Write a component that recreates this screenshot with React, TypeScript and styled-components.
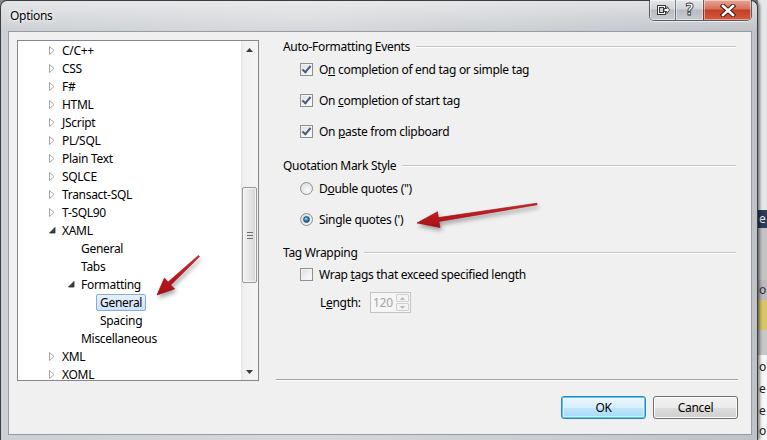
import React from 'react';
import styled, { createGlobalStyle, css } from 'styled-components';

const GlobalStyle = createGlobalStyle`
  html, body {
    margin: 0;
    padding: 0;
  }
  body {
    width: 767px;
    height: 440px;
    overflow: hidden;
    background: #8a8a8a;
    font-family: "Segoe UI", "Noto Sans", "Liberation Sans", sans-serif;
    font-size: 12px;
    letter-spacing: -0.3px;
    color: #000;
  }
`;

type TreeNode = {
  label: string;
  level: number;
  state?: 'collapsed' | 'expanded';
  selected?: boolean;
};

const treeNodes: TreeNode[] = [
  { label: 'C/C++', level: 0, state: 'collapsed' },
  { label: 'CSS', level: 0, state: 'collapsed' },
  { label: 'F#', level: 0, state: 'collapsed' },
  { label: 'HTML', level: 0, state: 'collapsed' },
  { label: 'JScript', level: 0, state: 'collapsed' },
  { label: 'PL/SQL', level: 0, state: 'collapsed' },
  { label: 'Plain Text', level: 0, state: 'collapsed' },
  { label: 'SQLCE', level: 0, state: 'collapsed' },
  { label: 'Transact-SQL', level: 0, state: 'collapsed' },
  { label: 'T-SQL90', level: 0, state: 'collapsed' },
  { label: 'XAML', level: 0, state: 'expanded' },
  { label: 'General', level: 1 },
  { label: 'Tabs', level: 1 },
  { label: 'Formatting', level: 1, state: 'expanded' },
  { label: 'General', level: 2, selected: true },
  { label: 'Spacing', level: 2 },
  { label: 'Miscellaneous', level: 1 },
  { label: 'XML', level: 0, state: 'collapsed' },
  { label: 'XOML', level: 0, state: 'collapsed' },
];

// builds a tapered arrow outline from tail to tip
const arrowPoints = (x1: number, y1: number, x2: number, y2: number, headLen: number, headHalf: number) => {
  const dx = x2 - x1;
  const dy = y2 - y1;
  const len = Math.sqrt(dx * dx + dy * dy);
  const ux = dx / len;
  const uy = dy / len;
  const px = -uy;
  const py = ux;
  const bx = x2 - ux * headLen;
  const by = y2 - uy * headLen;
  const tail = 0.8;
  const shaft = 2;
  const pts = [
    [x1 + px * tail, y1 + py * tail],
    [bx + px * shaft, by + py * shaft],
    [bx + px * headHalf, by + py * headHalf],
    [x2, y2],
    [bx - px * headHalf, by - py * headHalf],
    [bx - px * shaft, by - py * shaft],
    [x1 - px * tail, y1 - py * tail],
  ];
  return pts.map(p => `${p[0].toFixed(1)},${p[1].toFixed(1)}`).join(' ');
};

const App: React.FC = () => {
  return (
    <>
      <GlobalStyle />
      <Screen>
        <Window>
          <TitleBar>
            <Title>Options</Title>
            <CaptionGroup>
              <CaptionButton $width={25}>
                <svg width="14" height="12" viewBox="0 0 14 12">
                  <rect x="1.5" y="1.5" width="8" height="9" fill="#fff" stroke="#3a3a3a" />
                  <rect x="3.5" y="3.5" width="4" height="5" fill="#cfcfcf" stroke="#3a3a3a" />
                  <path d="M8 4.5 h3 v-2 l2.5 3.5 -2.5 3.5 v-2 h-3 z" fill="#fff" stroke="#3a3a3a" strokeWidth="0.9" />
                </svg>
              </CaptionButton>
              <CaptionButton $width={27}>
                <HelpGlyph>?</HelpGlyph>
              </CaptionButton>
              <CaptionButton $width={47} $close>
                <svg width="16" height="13" viewBox="0 0 16 13">
                  <path d="M3 2 L13 11 M13 2 L3 11" stroke="#4a1a12" strokeWidth="4.6" strokeLinecap="square" />
                  <path d="M3 2 L13 11 M13 2 L3 11" stroke="#fff" strokeWidth="2.6" strokeLinecap="square" />
                </svg>
              </CaptionButton>
            </CaptionGroup>
          </TitleBar>

          <Client>
            <MainRow>
              <TreePanel>
                <TreeList>
                  {treeNodes.map((node, i) => (
                    <TreeRow key={i} $level={node.level}>
                      <Expander>
                        {node.state === 'collapsed' && (
                          <svg width="6" height="9" viewBox="0 0 6 9">
                            <path d="M0.5 0.5 L5 4.5 L0.5 8.5 Z" fill="#fff" stroke="#a6a6a6" />
                          </svg>
                        )}
                        {node.state === 'expanded' && (
                          <svg width="7" height="7" viewBox="0 0 7 7">
                            <path d="M6 0.5 L6 6 L0.5 6 Z" fill="#404040" stroke="#262626" strokeWidth="0.8" />
                          </svg>
                        )}
                      </Expander>
                      <TreeLabel $selected={node.selected}>{node.label}</TreeLabel>
                    </TreeRow>
                  ))}
                </TreeList>
                <ScrollBar>
                  <ScrollArrow>
                    <svg width="7" height="4" viewBox="0 0 7 4">
                      <path d="M0 4 L3.5 0 L7 4 Z" fill="#3c3c3c" />
                    </svg>
                  </ScrollArrow>
                  <ScrollTrack>
                    <ScrollThumb>
                      <Grip />
                    </ScrollThumb>
                  </ScrollTrack>
                  <ScrollArrow>
                    <svg width="7" height="4" viewBox="0 0 7 4">
                      <path d="M0 0 L3.5 4 L7 0 Z" fill="#3c3c3c" />
                    </svg>
                  </ScrollArrow>
                </ScrollBar>
              </TreePanel>

              <SettingsPane>
                <GroupHeader>Auto-Formatting Events</GroupHeader>
                <OptionRow $height={31}>
                  <CheckBox $checked />
                  <span>O<u>n</u> completion of end tag or simple tag</span>
                </OptionRow>
                <OptionRow $height={31}>
                  <CheckBox $checked />
                  <span>On <u>c</u>ompletion of start tag</span>
                </OptionRow>
                <OptionRow $height={31}>
                  <CheckBox $checked />
                  <span>On <u>p</u>aste from clipboard</span>
                </OptionRow>

                <GroupHeader $gap={12}>Quotation Mark Style</GroupHeader>
                <OptionRow $height={31}>
                  <Radio />
                  <span>D<u>o</u>uble quotes (")</span>
                </OptionRow>
                <OptionRow $height={31}>
                  <Radio $checked />
                  <span>Sin<u>g</u>le quotes (')</span>
                </OptionRow>

                <GroupHeader $gap={11}>Tag Wrapping</GroupHeader>
                <OptionRow $height={28}>
                  <CheckBox />
                  <span>Wrap <u>t</u>ags that exceed specified length</span>
                </OptionRow>
                <LengthRow>
                  <LengthLabel>L<u>e</u>ngth:</LengthLabel>
                  <SpinBox>
                    <SpinValue>120</SpinValue>
                    <SpinButtons>
                      <SpinButton>
                        <svg width="5" height="3" viewBox="0 0 5 3">
                          <path d="M0 3 L2.5 0 L5 3 Z" fill="#b8b8b8" />
                        </svg>
                      </SpinButton>
                      <SpinButton>
                        <svg width="5" height="3" viewBox="0 0 5 3">
                          <path d="M0 0 L2.5 3 L5 0 Z" fill="#b8b8b8" />
                        </svg>
                      </SpinButton>
                    </SpinButtons>
                  </SpinBox>
                </LengthRow>
              </SettingsPane>
            </MainRow>

            <ButtonRow>
              <DialogButton $default>OK</DialogButton>
              <DialogButton>Cancel</DialogButton>
            </ButtonRow>
          </Client>

          <Annotations width="758" height="440" viewBox="0 0 758 440">
            <defs>
              <filter id="arrowShadow" x="-20%" y="-20%" width="140%" height="160%">
                <feDropShadow dx="1.5" dy="3" stdDeviation="2" floodColor="#000" floodOpacity="0.35" />
              </filter>
              <linearGradient id="arrowFill" x1="0" y1="0" x2="0" y2="1">
                <stop offset="0" stopColor="#d8262b" />
                <stop offset="1" stopColor="#a50f14" />
              </linearGradient>
            </defs>
            <polygon
              points={arrowPoints(199, 256, 157, 295, 17, 7.5)}
              fill="url(#arrowFill)"
              stroke="#8e0c10"
              strokeWidth="0.6"
              filter="url(#arrowShadow)"
            />
            <polygon
              points={arrowPoints(537, 204, 417, 223, 22, 8)}
              fill="url(#arrowFill)"
              stroke="#8e0c10"
              strokeWidth="0.6"
              filter="url(#arrowShadow)"
            />
          </Annotations>
        </Window>

        <DesktopEdge>
          <EdgeSlice $bg="#e6e7e9" $h={210} />
          <EdgeSlice $bg="#2c3b57" $h={18} $color="#e8ecf4">e</EdgeSlice>
          <EdgeSlice $bg="#c4c4c4" $h={52} />
          <EdgeSlice $bg="#bdb8bf" $h={20} $color="#333">o</EdgeSlice>
          <EdgeSlice $bg="#d9c56a" $h={30} />
          <EdgeSlice $bg="#c8c8c8" $h={25} />
          <EdgeSlice $bg="#f7f7f7" $h={23} $color="#222">o</EdgeSlice>
          <EdgeSlice $bg="#f7f7f7" $h={22} $color="#222">e</EdgeSlice>
          <EdgeSlice $bg="#f7f7f7" $h={22} $color="#222">e</EdgeSlice>
          <EdgeSlice $bg="#f7f7f7" $h={18} $color="#222">o</EdgeSlice>
        </DesktopEdge>
      </Screen>
    </>
  );
};

// Styled components
const Screen = styled.div`
  display: flex;
  width: 767px;
  height: 440px;
  overflow: hidden;
`;

const Window = styled.div`
  position: relative;
  box-sizing: border-box;
  width: 758px;
  height: 440px;
  flex: none;
  display: flex;
  flex-direction: column;
  padding: 0 5px 5px 7px;
  border: 1px solid #3b3d42;
  border-bottom: none;
  border-radius: 7px 7px 0 0;
  background:
    linear-gradient(180deg, rgba(255, 255, 255, 0.45) 0, rgba(255, 255, 255, 0) 30px),
    linear-gradient(90deg, #cdd0d4 0, #d6d8db 40%, #c9ccd0 75%, #bfc3c8 100%);
  box-shadow: 2px 0 3px rgba(0, 0, 0, 0.45);
`;

const TitleBar = styled.div`
  height: 30px;
  display: flex;
  justify-content: space-between;
  align-items: flex-start;
`;

const Title = styled.div`
  margin: 8px 0 0 2px;
  line-height: 14px;
  font-size: 12px;
  color: #000;
  text-shadow: 0 0 6px #fff, 0 0 3px #fff;
`;

const CaptionGroup = styled.div`
  display: flex;
  margin-top: -1px;
  border: 1px solid rgba(40, 44, 50, 0.7);
  border-top: none;
  border-radius: 0 0 5px 5px;
  overflow: hidden;
  box-shadow: 0 1px 0 rgba(255, 255, 255, 0.6);
`;

const CaptionButton = styled.div<{ $width: number; $close?: boolean }>`
  width: ${p => p.$width}px;
  height: 20px;
  display: flex;
  align-items: center;
  justify-content: center;
  border-left: 1px solid rgba(40, 44, 50, 0.55);
  box-shadow: inset 0 0 0 1px rgba(255, 255, 255, 0.45);
  background: linear-gradient(180deg, #e4e6e9 0, #d0d3d7 45%, #b8bcc2 50%, #c8ccd1 100%);
  &:first-child {
    border-left: none;
  }
  ${p =>
    p.$close &&
    css`
      background: linear-gradient(180deg, #e8a493 0, #d4725c 45%, #c33f25 50%, #d45a3e 100%);
    `}
`;

const HelpGlyph = styled.span`
  font-family: "DejaVu Sans", sans-serif;
  font-weight: bold;
  font-size: 15px;
  line-height: 16px;
  color: #fff;
  -webkit-text-stroke: 0.8px #333;
`;

const Client = styled.div`
  flex: 1;
  display: flex;
  flex-direction: column;
  padding: 8px 13px 15px 8px;
  background: #f0f0f0;
  border: 1px solid #959ba2;
`;

const MainRow = styled.div`
  height: 341px;
  display: flex;
  align-items: flex-start;
  gap: 17px;
`;

const TreePanel = styled.div`
  box-sizing: border-box;
  width: 242px;
  height: 341px;
  flex: none;
  display: flex;
  border: 1px solid #828790;
  background: #fff;
  overflow: hidden;
`;

const TreeList = styled.div`
  flex: 1;
  overflow: hidden;
`;

const TreeRow = styled.div<{ $level: number }>`
  height: 18px;
  display: flex;
  align-items: center;
  padding-left: ${p => 24 + p.$level * 19}px;
  white-space: nowrap;
`;

const Expander = styled.span`
  width: 16px;
  height: 18px;
  display: flex;
  align-items: center;
  padding-left: 7px;
  box-sizing: border-box;
`;

const TreeLabel = styled.span<{ $selected?: boolean }>`
  padding: 0 3px;
  line-height: 15px;
  border: 1px solid transparent;
  border-radius: 2px;
  ${p =>
    p.$selected &&
    css`
      background: linear-gradient(180deg, #e6f0fb 0, #cfe2f9 100%);
      border-color: #84acdd;
    `}
`;

const ScrollBar = styled.div`
  width: 17px;
  flex: none;
  display: flex;
  flex-direction: column;
  background: linear-gradient(90deg, #e4e4e4 0, #f1f1f1 3px, #f4f4f4 100%);
`;

const ScrollArrow = styled.div`
  height: 17px;
  display: flex;
  align-items: center;
  justify-content: center;
`;

const ScrollTrack = styled.div`
  flex: 1;
  padding: 129px 1px 0;
`;

const ScrollThumb = styled.div`
  height: 96px;
  box-sizing: border-box;
  display: flex;
  align-items: center;
  justify-content: center;
  border: 1px solid #979797;
  border-radius: 2px;
  background: linear-gradient(90deg, #f2f2f2 0, #e6e6e6 50%, #d5d5d5 100%);
  box-shadow: inset 0 0 0 1px rgba(255, 255, 255, 0.7);
`;

const Grip = styled.div`
  width: 6px;
  height: 5px;
  border-top: 1px solid #6e6e6e;
  border-bottom: 1px solid #6e6e6e;
  position: relative;
  &::after {
    content: '';
    position: absolute;
    left: 0;
    right: 0;
    top: 2px;
    height: 1px;
    background: #6e6e6e;
  }
`;

const SettingsPane = styled.div`
  flex: 1;
  box-sizing: border-box;
  height: 340px;
  display: flex;
  flex-direction: column;
  padding-right: 2px;
  border-bottom: 1px solid #a0a0a0;
  box-shadow: 0 1px 0 #fff;
`;

const GroupHeader = styled.div<{ $gap?: number }>`
  height: 14px;
  display: flex;
  align-items: center;
  gap: 6px;
  margin-top: ${p => p.$gap ?? 0}px;
  padding-left: 7px;
  line-height: 14px;
  white-space: nowrap;
  &::after {
    content: '';
    flex: 1;
    height: 0;
    border-top: 1px solid #c4c4c4;
    border-bottom: 1px solid #fff;
  }
`;

const OptionRow = styled.div<{ $height: number }>`
  height: ${p => p.$height}px;
  display: flex;
  align-items: center;
  gap: 6px;
  padding-left: 24px;
  white-space: nowrap;
`;

const CheckBox = styled.span<{ $checked?: boolean }>`
  box-sizing: border-box;
  width: 13px;
  height: 13px;
  flex: none;
  border: 1px solid #8e8f8f;
  background: linear-gradient(135deg, #dcdcdc 0, #f0f0f0 55%, #fdfdfd 100%);
  box-shadow: inset 0 0 0 1px #f4f4f4;
  position: relative;
  ${p =>
    p.$checked &&
    css`
      &::after {
        content: '';
        position: absolute;
        left: 3px;
        top: 0px;
        width: 3px;
        height: 7px;
        border-right: 2px solid #4a5a82;
        border-bottom: 2px solid #4a5a82;
        transform: rotate(40deg);
      }
    `}
`;

const Radio = styled.span<{ $checked?: boolean }>`
  box-sizing: border-box;
  width: 13px;
  height: 13px;
  flex: none;
  border-radius: 50%;
  border: 1px solid #8e8f8f;
  background: radial-gradient(circle at 60% 65%, #fafafa 0, #e8e8e8 55%, #cfcfcf 100%);
  display: flex;
  align-items: center;
  justify-content: center;
  ${p =>
    p.$checked &&
    css`
      &::after {
        content: '';
        width: 5px;
        height: 5px;
        border-radius: 50%;
        background: radial-gradient(circle at 40% 35%, #a9dcf6 0, #2c7fba 45%, #0e3f6a 100%);
        border: 1px solid #1b4f7c;
      }
    `}
`;

const LengthRow = styled.div`
  height: 29px;
  display: flex;
  align-items: center;
  padding-left: 44px;
`;

const LengthLabel = styled.span`
  width: 50px;
  white-space: nowrap;
`;

const SpinBox = styled.div`
  box-sizing: border-box;
  width: 41px;
  height: 21px;
  display: flex;
  border: 1px solid #c3c3c3;
  background: #f6f6f6;
`;

const SpinValue = styled.span`
  flex: 1;
  padding-left: 2px;
  line-height: 19px;
  color: #a3a3a3;
`;

const SpinButtons = styled.div`
  width: 13px;
  display: flex;
  flex-direction: column;
  gap: 1px;
  padding: 1px 1px 1px 0;
`;

const SpinButton = styled.div`
  flex: 1;
  display: flex;
  align-items: center;
  justify-content: center;
  border: 1px solid #d0d0d0;
  border-radius: 1px;
  background: #f3f3f3;
`;

const ButtonRow = styled.div`
  display: flex;
  justify-content: flex-end;
  gap: 7px;
  margin-top: 15px;
`;

const DialogButton = styled.div<{ $default?: boolean }>`
  box-sizing: border-box;
  width: 85px;
  height: 23px;
  display: flex;
  align-items: center;
  justify-content: center;
  border: 1px solid #707070;
  border-radius: 3px;
  background: linear-gradient(180deg, #f2f2f2 0, #ebebeb 50%, #dddddd 51%, #cfcfcf 100%);
  box-shadow: inset 0 0 0 1px #fcfcfc;
  ${p =>
    p.$default &&
    css`
      border-color: #3c7fb1;
      background: linear-gradient(180deg, #eaf6fd 0, #d9f0fc 50%, #bee6fd 51%, #a7d9f5 100%);
      box-shadow: inset 0 0 0 1px #48d0f6, inset 0 0 0 2px rgba(255, 255, 255, 0.5);
    `}
`;

const Annotations = styled.svg`
  position: absolute;
  left: -1px;
  top: -1px;
  pointer-events: none;
`;

const DesktopEdge = styled.div`
  flex: 1;
  display: flex;
  flex-direction: column;
  overflow: hidden;
`;

const EdgeSlice = styled.div<{ $bg: string; $h: number; $color?: string }>`
  height: ${p => p.$h}px;
  flex: none;
  background: ${p => p.$bg};
  color: ${p => p.$color ?? 'transparent'};
  font-size: 12px;
  line-height: ${p => p.$h}px;
  white-space: nowrap;
  padding-left: 1px;
`;

export default App;
